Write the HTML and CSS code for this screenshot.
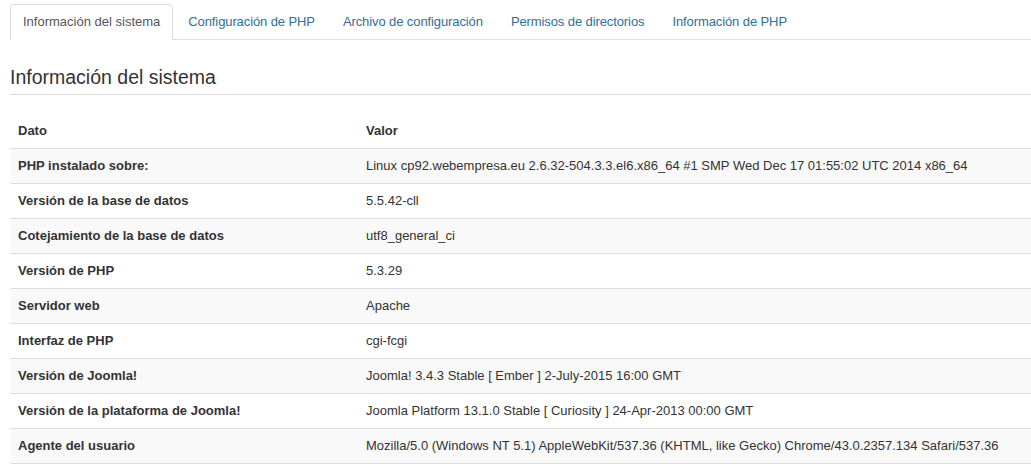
FILE: index.html
```html
<!DOCTYPE html>
<html>
    <head>
        <meta charset="UTF-8">
        <meta name="viewport" content="width=device-width, initial-scale=1.0">
        <title>Información del sistema</title>
        <link rel="stylesheet" href="styles.css">
    </head>

    <body>
        <div id="container">
            <ul class="nav-tabs">
                <li class="active"><a href="#">Información del sistema</a></li>
                <li><a href="#">Configuración de PHP</a></li>
                <li><a href="#">Archivo de configuración</a></li>
                <li><a href="#">Permisos de directorios</a></li>
                <li><a href="#">Información de PHP</a></li>
            </ul>

            <h2 class="page-header">Información del sistema</h2>

            <table class="table-striped">
                <thead>
                    <tr>
                        <th class="col-dato">Dato</th>
                        <th>Valor</th>
                    </tr>
                </thead>
                <tbody>
                    <tr>
                        <th>PHP instalado sobre:</th>
                        <td>Linux cp92.webempresa.eu 2.6.32-504.3.3.el6.x86_64 #1 SMP Wed Dec 17 01:55:02 UTC 2014 x86_64</td>
                    </tr>
                    <tr>
                        <th>Versión de la base de datos</th>
                        <td>5.5.42-cll</td>
                    </tr>
                    <tr>
                        <th>Cotejamiento de la base de datos</th>
                        <td>utf8_general_ci</td>
                    </tr>
                    <tr>
                        <th>Versión de PHP</th>
                        <td>5.3.29</td>
                    </tr>
                    <tr>
                        <th>Servidor web</th>
                        <td>Apache</td>
                    </tr>
                    <tr>
                        <th>Interfaz de PHP</th>
                        <td>cgi-fcgi</td>
                    </tr>
                    <tr>
                        <th>Versión de Joomla!</th>
                        <td>Joomla! 3.4.3 Stable [ Ember ] 2-July-2015 16:00 GMT</td>
                    </tr>
                    <tr>
                        <th>Versión de la plataforma de Joomla!</th>
                        <td>Joomla Platform 13.1.0 Stable [ Curiosity ] 24-Apr-2013 00:00 GMT</td>
                    </tr>
                    <tr>
                        <th>Agente del usuario</th>
                        <td>Mozilla/5.0 (Windows NT 5.1) AppleWebKit/537.36 (KHTML, like Gecko) Chrome/43.0.2357.134 Safari/537.36</td>
                    </tr>
                </tbody>
            </table>
        </div>
    </body>
</html>
```

FILE: styles.css
```css
body {
    font-family: 'Liberation Sans', Arial, sans-serif;
    font-size: 13px;
    line-height: 18px;
    color: #333;
    background: #fff;
    margin: 0;
    padding: 0;
}
#container {
    padding: 4px 0 0 10px;
}
.nav-tabs {
    display: flex;
    list-style: none;
    margin: 0;
    padding: 0;
    border-bottom: 1px solid #ddd;
}
.nav-tabs li {
    margin-bottom: -1px;
}
.nav-tabs a {
    display: block;
    padding: 8px 12px;
    margin-right: 2px;
    border: 1px solid transparent;
    border-radius: 4px 4px 0 0;
    color: #336e96;
    text-decoration: none;
    letter-spacing: -0.1px;
}
.nav-tabs .active a {
    color: #555;
    background: #fff;
    border-color: #ddd #ddd transparent;
    letter-spacing: 0;
}
.page-header {
    font-size: 19.5px;
    font-weight: normal;
    line-height: 24px;
    color: #333;
    margin: 25px 0 19px;
    padding-bottom: 5px;
    border-bottom: 1px solid #ddd;
}
table {
    width: 1060px;
    border-collapse: collapse;
    border-spacing: 0;
    border-bottom: 1px solid #ddd;
}
th, td {
    padding: 8px;
    line-height: 18px;
    text-align: left;
    vertical-align: top;
    border-top: 1px solid #ddd;
}
th {
    font-weight: bold;
}
thead tr:first-child th {
    border-top: 0;
}
.col-dato {
    width: 332px;
}
.table-striped tbody tr:nth-child(odd) th,
.table-striped tbody tr:nth-child(odd) td {
    background-color: #f9f9f9;
}
```
